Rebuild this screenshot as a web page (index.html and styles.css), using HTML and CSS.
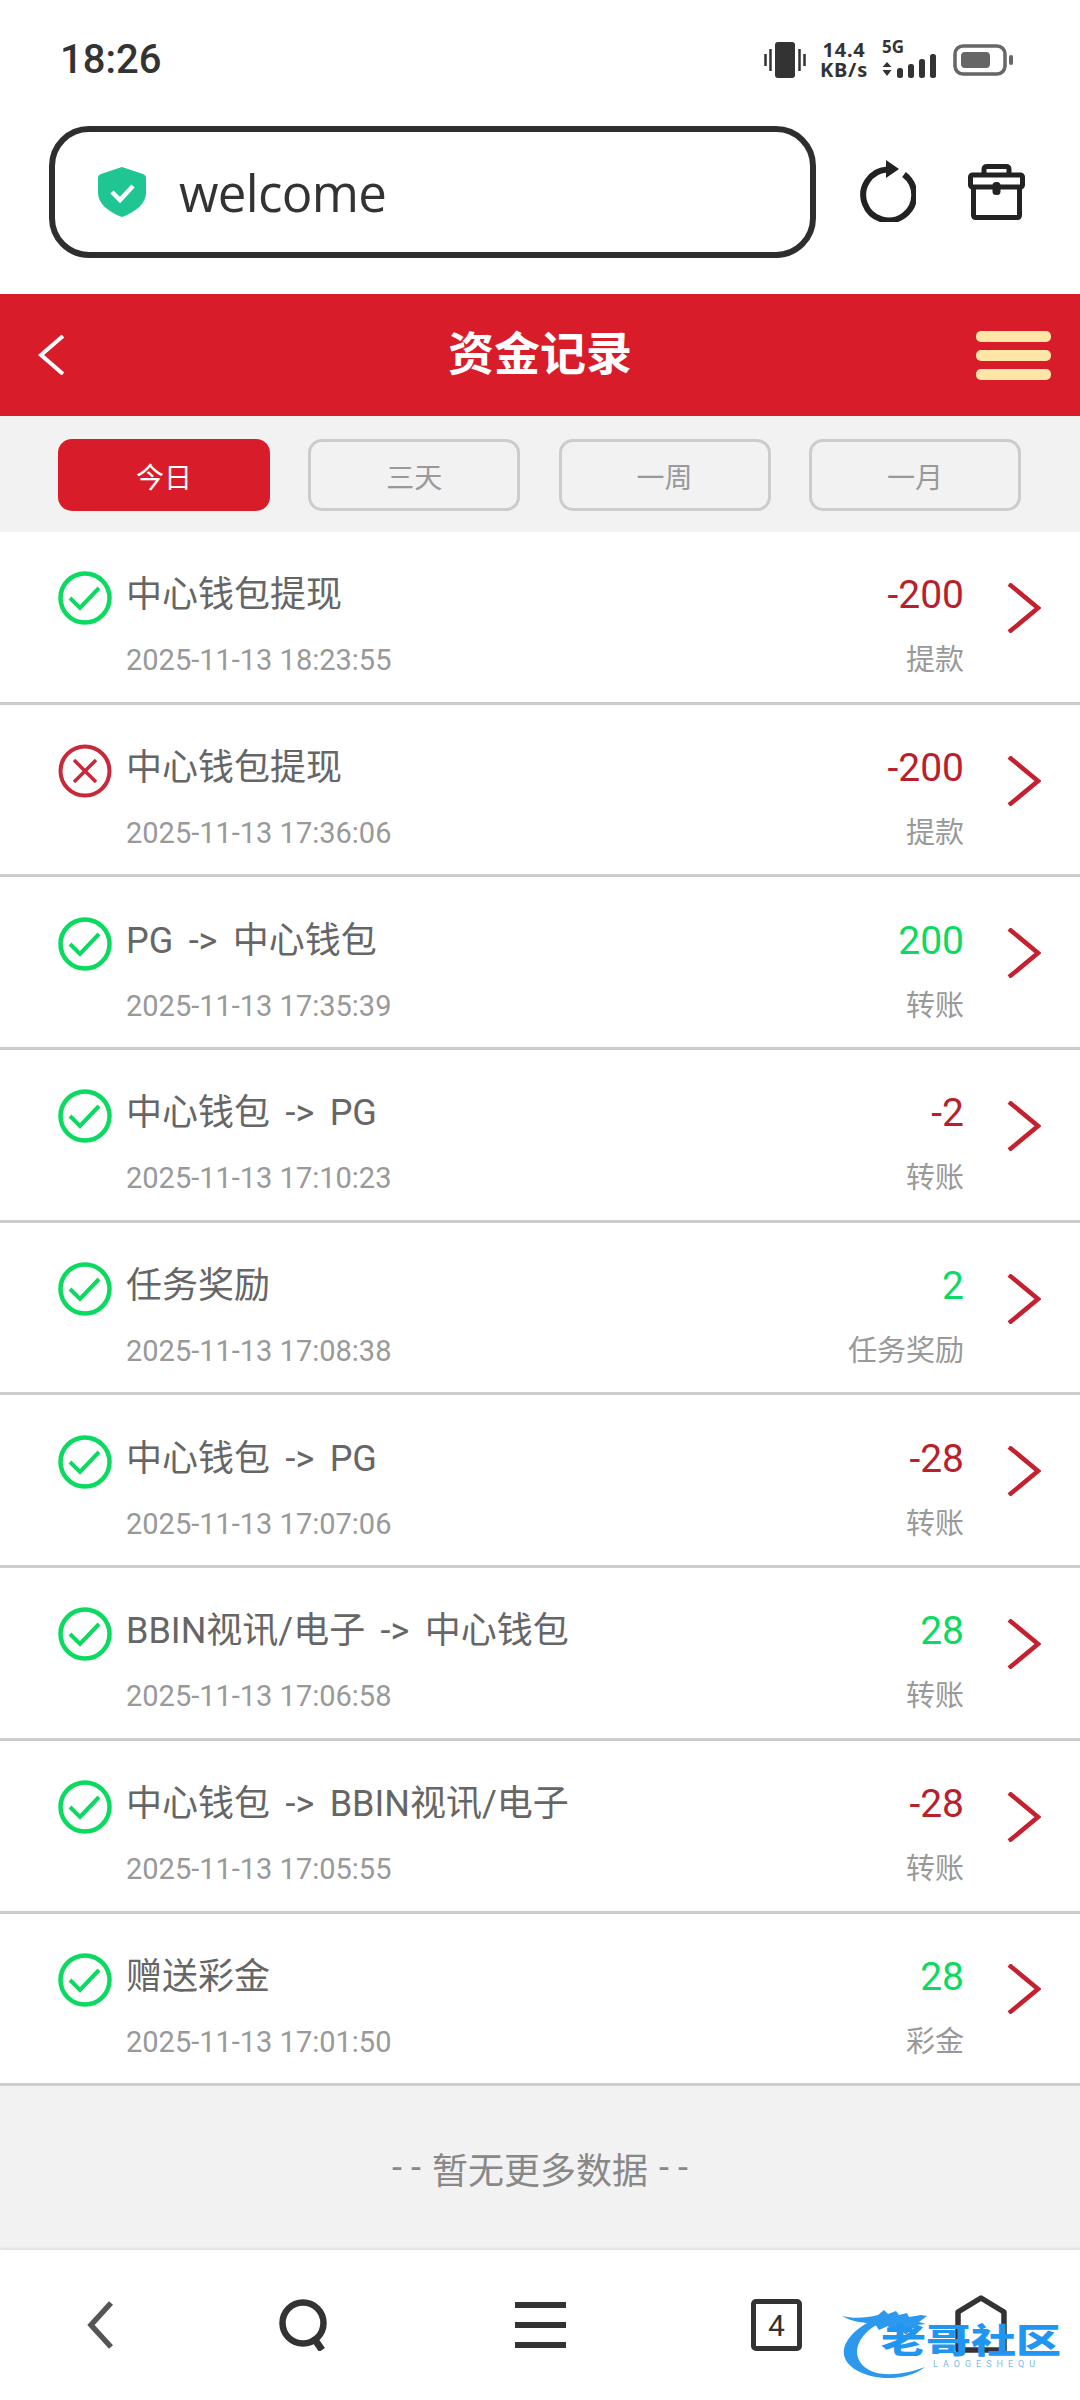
FILE: index.html
```html
<!DOCTYPE html>
<html>
<head>
    <title>资金记录</title>
    <link rel="stylesheet" href="styles.css">
</head>
<body>
<!-- Phone status bar -->
<div class="status-bar">
    <span class="clock">18:26</span>
    <div class="status-icons">
        <svg class="ic-vibrate" width="42" height="36" viewBox="0 0 42 36">
            <rect x="11" y="0" width="20" height="36" rx="3" fill="#333"/>
            <path d="M1.500 12v12M6.500 7v22M35.500 7v22M40.500 12v12" stroke="#333" stroke-width="2.500" fill="none"/>
        </svg>
        <div class="speed"><span>14.4</span><span>KB/s</span></div>
        <div class="signal">
            <span class="net">5G</span>
            <svg width="56" height="24" viewBox="0 0 56 24">
                <path d="M5 8l4.500 5h-9zM5 22l4.500-6h-9z" fill="#333"/>
                <rect x="15" y="14" width="6" height="10" rx="2.500" fill="#333"/>
                <rect x="26" y="10" width="6" height="14" rx="2.500" fill="#333"/>
                <rect x="37" y="5" width="6" height="19" rx="2.500" fill="#333"/>
                <rect x="48" y="0" width="6" height="24" rx="2.500" fill="#333"/>
            </svg>
        </div>
        <svg class="ic-battery" width="60" height="32" viewBox="0 0 60 32">
            <rect x="2" y="2" width="50" height="28" rx="8" fill="none" stroke="#666" stroke-width="3.500"/>
            <rect x="8" y="8" width="29" height="16" rx="4" fill="#666"/>
            <rect x="56" y="11" width="4" height="10" rx="2" fill="#666"/>
        </svg>
    </div>
</div>

<!-- Browser address bar -->
<div class="toolbar">
    <div class="address">
        <svg width="48" height="50" viewBox="0 0 48 50">
            <path d="M24 0l21 7c2 .7 3 2 3 4v15c0 10-10 19-24 24C10 45 0 36 0 26V11c0-2 1-3.300 3-4z" fill="#1fc592"/>
            <path d="M14 25l8 8 13-14" fill="none" stroke="#fff" stroke-width="4.500"/>
        </svg>
        <span class="address-text">welcome</span>
    </div>
    <svg class="tool-refresh" width="58" height="62" viewBox="0 0 58 62">
        <path d="M43 14.500a25.500 25.500 0 1 1-17-5" fill="none" stroke="#222" stroke-width="6" transform="translate(3 0)"/>
        <path d="M28 0l13 9-13 9z" fill="#222"/>
    </svg>
    <svg class="tool-box" width="58" height="56" viewBox="0 0 58 56">
        <rect x="2.500" y="11" width="52" height="12" rx="2" fill="none" stroke="#222" stroke-width="5"/>
        <path d="M5.500 23v28c0 1.500 1 2.500 2.500 2.500h41c1.500 0 2.500-1 2.500-2.500V23M16 11V5.500c0-2 1-3 3-3h19c2 0 3 1 3 3V11" fill="none" stroke="#222" stroke-width="5"/>
        <rect x="24.500" y="18" width="8" height="13" rx="3.500" fill="#222"/>
    </svg>
</div>

<!-- Red page header -->
<header class="page-head">
    <svg class="head-back" width="26" height="40" viewBox="0 0 26 40">
        <path d="M25 1L3 20l22 19" fill="none" stroke="#fff" stroke-width="4"/>
    </svg>
    <h1>资金记录</h1>
    <div class="head-menu"><i></i><i></i><i></i></div>
</header>

<!-- Date filter -->
<div class="filter">
    <div class="filter-btn active">今日</div>
    <div class="filter-btn">三天</div>
    <div class="filter-btn">一周</div>
    <div class="filter-btn">一月</div>
</div>

<!-- Records -->
<div class="records">
    <div class="row">
        <div class="row-main">
            <div class="line">
                <svg class="state" width="54" height="54" viewBox="0 0 54 54"><circle cx="27" cy="27" r="24.500" fill="none" stroke="#0adb60" stroke-width="4.500"/><path d="M12 27l10 10 19-20" fill="none" stroke="#0adb60" stroke-width="4"/></svg>
                <span class="title">中心钱包提现</span>
                <span class="amount out">-200</span>
            </div>
            <div class="line sub"><span>2025-11-13 18:23:55</span><span>提款</span></div>
        </div>
        <svg class="more" width="34" height="50" viewBox="0 0 34 50"><path d="M2 1l29 24L2 49" fill="none" stroke="#c4202f" stroke-width="4.500"/></svg>
    </div>
    <div class="row">
        <div class="row-main">
            <div class="line">
                <svg class="state" width="54" height="54" viewBox="0 0 54 54"><circle cx="27" cy="27" r="24.500" fill="none" stroke="#c9283a" stroke-width="4"/><path d="M16 16l22 22M38 16L16 38" fill="none" stroke="#c9283a" stroke-width="3.500"/></svg>
                <span class="title">中心钱包提现</span>
                <span class="amount out">-200</span>
            </div>
            <div class="line sub"><span>2025-11-13 17:36:06</span><span>提款</span></div>
        </div>
        <svg class="more" width="34" height="50" viewBox="0 0 34 50"><path d="M2 1l29 24L2 49" fill="none" stroke="#c4202f" stroke-width="4.500"/></svg>
    </div>
    <div class="row">
        <div class="row-main">
            <div class="line">
                <svg class="state" width="54" height="54" viewBox="0 0 54 54"><circle cx="27" cy="27" r="24.500" fill="none" stroke="#0adb60" stroke-width="4.500"/><path d="M12 27l10 10 19-20" fill="none" stroke="#0adb60" stroke-width="4"/></svg>
                <span class="title">PG -&gt; 中心钱包</span>
                <span class="amount in">200</span>
            </div>
            <div class="line sub"><span>2025-11-13 17:35:39</span><span>转账</span></div>
        </div>
        <svg class="more" width="34" height="50" viewBox="0 0 34 50"><path d="M2 1l29 24L2 49" fill="none" stroke="#c4202f" stroke-width="4.500"/></svg>
    </div>
    <div class="row">
        <div class="row-main">
            <div class="line">
                <svg class="state" width="54" height="54" viewBox="0 0 54 54"><circle cx="27" cy="27" r="24.500" fill="none" stroke="#0adb60" stroke-width="4.500"/><path d="M12 27l10 10 19-20" fill="none" stroke="#0adb60" stroke-width="4"/></svg>
                <span class="title">中心钱包 -&gt; PG</span>
                <span class="amount out">-2</span>
            </div>
            <div class="line sub"><span>2025-11-13 17:10:23</span><span>转账</span></div>
        </div>
        <svg class="more" width="34" height="50" viewBox="0 0 34 50"><path d="M2 1l29 24L2 49" fill="none" stroke="#c4202f" stroke-width="4.500"/></svg>
    </div>
    <div class="row">
        <div class="row-main">
            <div class="line">
                <svg class="state" width="54" height="54" viewBox="0 0 54 54"><circle cx="27" cy="27" r="24.500" fill="none" stroke="#0adb60" stroke-width="4.500"/><path d="M12 27l10 10 19-20" fill="none" stroke="#0adb60" stroke-width="4"/></svg>
                <span class="title">任务奖励</span>
                <span class="amount in">2</span>
            </div>
            <div class="line sub"><span>2025-11-13 17:08:38</span><span>任务奖励</span></div>
        </div>
        <svg class="more" width="34" height="50" viewBox="0 0 34 50"><path d="M2 1l29 24L2 49" fill="none" stroke="#c4202f" stroke-width="4.500"/></svg>
    </div>
    <div class="row">
        <div class="row-main">
            <div class="line">
                <svg class="state" width="54" height="54" viewBox="0 0 54 54"><circle cx="27" cy="27" r="24.500" fill="none" stroke="#0adb60" stroke-width="4.500"/><path d="M12 27l10 10 19-20" fill="none" stroke="#0adb60" stroke-width="4"/></svg>
                <span class="title">中心钱包 -&gt; PG</span>
                <span class="amount out">-28</span>
            </div>
            <div class="line sub"><span>2025-11-13 17:07:06</span><span>转账</span></div>
        </div>
        <svg class="more" width="34" height="50" viewBox="0 0 34 50"><path d="M2 1l29 24L2 49" fill="none" stroke="#c4202f" stroke-width="4.500"/></svg>
    </div>
    <div class="row">
        <div class="row-main">
            <div class="line">
                <svg class="state" width="54" height="54" viewBox="0 0 54 54"><circle cx="27" cy="27" r="24.500" fill="none" stroke="#0adb60" stroke-width="4.500"/><path d="M12 27l10 10 19-20" fill="none" stroke="#0adb60" stroke-width="4"/></svg>
                <span class="title">BBIN视讯/电子 -&gt; 中心钱包</span>
                <span class="amount in">28</span>
            </div>
            <div class="line sub"><span>2025-11-13 17:06:58</span><span>转账</span></div>
        </div>
        <svg class="more" width="34" height="50" viewBox="0 0 34 50"><path d="M2 1l29 24L2 49" fill="none" stroke="#c4202f" stroke-width="4.500"/></svg>
    </div>
    <div class="row">
        <div class="row-main">
            <div class="line">
                <svg class="state" width="54" height="54" viewBox="0 0 54 54"><circle cx="27" cy="27" r="24.500" fill="none" stroke="#0adb60" stroke-width="4.500"/><path d="M12 27l10 10 19-20" fill="none" stroke="#0adb60" stroke-width="4"/></svg>
                <span class="title">中心钱包 -&gt; BBIN视讯/电子</span>
                <span class="amount out">-28</span>
            </div>
            <div class="line sub"><span>2025-11-13 17:05:55</span><span>转账</span></div>
        </div>
        <svg class="more" width="34" height="50" viewBox="0 0 34 50"><path d="M2 1l29 24L2 49" fill="none" stroke="#c4202f" stroke-width="4.500"/></svg>
    </div>
    <div class="row">
        <div class="row-main">
            <div class="line">
                <svg class="state" width="54" height="54" viewBox="0 0 54 54"><circle cx="27" cy="27" r="24.500" fill="none" stroke="#0adb60" stroke-width="4.500"/><path d="M12 27l10 10 19-20" fill="none" stroke="#0adb60" stroke-width="4"/></svg>
                <span class="title">赠送彩金</span>
                <span class="amount in">28</span>
            </div>
            <div class="line sub"><span>2025-11-13 17:01:50</span><span>彩金</span></div>
        </div>
        <svg class="more" width="34" height="50" viewBox="0 0 34 50"><path d="M2 1l29 24L2 49" fill="none" stroke="#c4202f" stroke-width="4.500"/></svg>
    </div>
</div>

<div class="no-more"><span class="dash">--</span> 暂无更多数据 <span class="dash">--</span></div>

<!-- Browser bottom bar -->
<nav class="bottom-nav">
    <svg width="28" height="48" viewBox="0 0 28 48"><path d="M25 2L5 24l20 22" fill="none" stroke="#555" stroke-width="5.500"/></svg>
    <svg width="50" height="52" viewBox="0 0 50 52"><circle cx="24" cy="24" r="20.500" fill="none" stroke="#333" stroke-width="6.500"/><path d="M34 38l9 13" stroke="#333" stroke-width="7" fill="none"/></svg>
    <div class="nav-menu"><i></i><i></i><i></i></div>
    <div class="nav-tabs">4</div>
    <svg width="52" height="58" viewBox="0 0 52 58"><path d="M3 55V17L26 3l23 14v38z" fill="none" stroke="#333" stroke-width="5.500" stroke-linejoin="round"/></svg>
    <!-- Forum watermark over the bar -->
    <div class="watermark">
        <svg class="wm-dragon" width="150" height="72" viewBox="0 0 150 72">
            <path d="M38 8C12 18 0 34 2 46c3 16 32 28 62 21 8-2 14-5 19-9-18 7-40 10-54 4C13 55 10 38 24 24c6-6 13-10 22-13z" fill="#2c98ee"/>
            <path d="M0 7c12 3 24 2 36-1l6-5 4 4 8-3 3 4 8-2 2 4 12-2 6 1-8 6 7 2-9 1 4 5-9-2-6 7-6-6-9 3-3-6-9 4-4-6C24 14 10 13 0 7z" fill="#2c98ee"/>
        </svg>
        <div class="wm-name">老哥社区</div>
        <div class="wm-latin">LAOGESHEQU</div>
    </div>
</nav>
</body>
</html>
```

FILE: styles.css
```css
* {
    box-sizing: border-box;
}

html, body {
    margin: 0;
    padding: 0;
}

body {
    width: 1080px;
    height: 2400px;
    overflow: hidden;
    background: #fff;
    font-family: Roboto, "Noto Sans CJK SC", sans-serif;
    display: flex;
    flex-direction: column;
}

/* status bar */
.status-bar {
    height: 116px;
    display: flex;
    justify-content: space-between;
    align-items: flex-start;
    padding: 37px 67px 0 60px;
}

.clock {
    font-size: 40px;
    line-height: 46px;
    font-weight: 500;
    color: #333;
}

.status-icons {
    display: flex;
    align-items: flex-start;
    padding-top: 5px;
}

.ic-vibrate {
    margin-right: 15px;
}

.speed {
    display: flex;
    flex-direction: column;
    align-items: center;
    font-family: "Noto Sans", sans-serif;
    font-size: 20px;
    line-height: 20px;
    font-weight: 700;
    letter-spacing: 0.8px;
    color: #333;
    width: 46px;
    margin-top: -2px;
}

.signal {
    width: 56px;
    margin-left: 15px;
    position: relative;
    height: 36px;
}

.net {
    position: absolute;
    left: 0;
    top: -3px;
    font-family: "Noto Sans", sans-serif;
    font-size: 17px;
    line-height: 16px;
    font-weight: 700;
    color: #333;
}

.signal svg {
    position: absolute;
    left: 0;
    top: 12px;
}

.ic-battery {
    margin-left: 15px;
    margin-top: 2px;
}

/* address bar */
.toolbar {
    height: 178px;
    display: flex;
    align-items: flex-start;
    padding: 10px 0 0 49px;
}

.address {
    width: 767px;
    height: 132px;
    border: 6px solid #2e2e2e;
    border-radius: 40px;
    display: flex;
    align-items: center;
    padding-left: 43px;
    gap: 33px;
}

.address-text {
    font-family: "Open Sans", sans-serif;
    font-size: 51px;
    color: #333;
    letter-spacing: -0.7px;
}

.tool-refresh {
    margin: 34px 0 0 42px;
}

.tool-box {
    margin: 38px 0 0 52px;
}

/* red header */
.page-head {
    height: 122px;
    background: #d91c2a;
    display: grid;
    grid-template-columns: 1fr auto 1fr;
    align-items: center;
    padding: 0 29px;
}

.head-back {
    margin-left: 9px;
}

.page-head h1 {
    margin: -3px 0 0;
    font-size: 46px;
    line-height: 60px;
    font-weight: 700;
    color: #fff;
}

.head-menu {
    display: flex;
    flex-direction: column;
    gap: 8px;
    width: 75px;
    justify-self: end;
}

.head-menu i {
    display: block;
    height: 11px;
    border-radius: 5px;
    background: #ffe6a6;
}

/* filter */
.filter {
    height: 116px;
    background: #f2f2f2;
    display: flex;
    gap: 38.3px;
    padding: 23px 0 0 58px;
}

.filter-btn {
    width: 212px;
    height: 72px;
    border: 3px solid #cccccc;
    border-radius: 14px;
    display: flex;
    align-items: center;
    justify-content: center;
    padding-top: 2px;
    font-size: 28px;
    color: #999;
}

.filter-btn.active {
    background: #d91c2a;
    border-color: #d91c2a;
    color: #fff;
}

/* record rows */
.row {
    height: 172.7px;
    border-bottom: 3px solid #cccccc;
    display: flex;
    align-items: center;
    padding: 0 39px 0 58px;
}

.row-main {
    flex: 1;
    margin-right: 43px;
    margin-top: 18px;
}

.line {
    display: flex;
    align-items: center;
}

.state {
    flex: none;
    margin-right: 14px;
}

.title {
    flex: 1;
    font-size: 36px;
    line-height: 50px;
    word-spacing: 6.5px;
    color: #666;
    margin-top: -6px;
}

.amount {
    font-size: 39px;
    line-height: 50px;
    margin-top: -6px;
}

.amount.out {
    color: #b8202c;
}

.amount.in {
    color: #0adb60;
}

.sub {
    justify-content: space-between;
    font-size: 29px;
    line-height: 40px;
    color: #999;
    padding-left: 68px;
    margin-top: 15px;
}

.more {
    flex: none;
    margin-bottom: 18px;
}

/* footer text */
.no-more {
    height: 164px;
    background: #f2f2f2;
    display: flex;
    align-items: center;
    justify-content: center;
    gap: 11px;
    font-size: 36px;
    color: #888;
}

.dash {
    letter-spacing: 9px;
    margin-right: -9px;
}

/* bottom bar */
.bottom-nav {
    position: relative;
    flex: 1;
    background: #fff;
    box-shadow: 0 -2px 3px rgba(0, 0, 0, 0.08);
    display: flex;
    align-items: flex-start;
    padding: 45px 0 0 86px;
}

.bottom-nav svg:nth-child(1) {
    margin-top: 6px;
}

.bottom-nav svg:nth-child(2) {
    margin: 4px 0 0 165px;
}

.nav-menu {
    display: flex;
    flex-direction: column;
    gap: 14px;
    width: 51px;
    margin: 7px 0 0 186px;
}

.nav-menu i {
    display: block;
    height: 6px;
    background: #333;
}

.nav-tabs {
    width: 51px;
    height: 52px;
    border: 5px solid #333;
    border-radius: 5px;
    margin: 4px 0 0 185px;
    display: flex;
    align-items: center;
    justify-content: center;
    font-size: 30px;
    color: #333;
}

.bottom-nav > svg:nth-child(5) {
    margin-left: 153px;
}

.watermark {
    position: absolute;
    left: 842px;
    top: 53px;
    width: 226px;
    height: 72px;
}

.wm-dragon {
    position: absolute;
    left: 0;
    top: 0;
}

.wm-name {
    position: absolute;
    left: 39px;
    top: 19px;
    font-size: 45px;
    line-height: 40px;
    font-weight: 900;
    color: #2196f0;
    transform: scaleY(0.75);
}

.wm-latin {
    position: absolute;
    left: 91px;
    top: 55px;
    font-size: 9px;
    line-height: 12px;
    letter-spacing: 5px;
    color: #7dbbec;
}
```
